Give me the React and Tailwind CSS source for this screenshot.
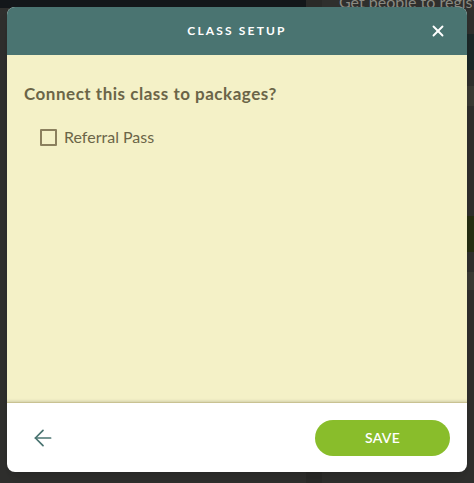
import React from "react";
import { X, ArrowLeft } from "lucide-react";

const font = { fontFamily: "Lato, 'Open Sans', sans-serif" };

const Backdrop = () => (
  <div className="absolute inset-0 flex bg-[#2f2f2d]">
    <div className="w-[306px] h-[8px] bg-[#13171a]" />
    <div className="w-[16px] h-full bg-[#2a2a28]" />
    <div className="flex-1 flex flex-col overflow-hidden">
      <div className="h-[8px] overflow-hidden whitespace-nowrap pl-[17px] text-[#8a8a82] text-[16px] leading-[4px]">Get people to register</div>
      <div className="h-[26px]" />
      <div className="h-[36px] bg-[#1c2828]" />
      <div className="h-[16px]" />
      <div className="h-[20px] bg-[#3a3a34]" />
      <div className="h-[110px]" />
      <div className="h-[36px] bg-[#252e12]" />
      <div className="h-[20px]" />
      <div className="h-[18px] bg-[#3a3a34]" />
    </div>
  </div>
);

export default function App() {
  return (
    <div className="relative w-[474px] h-[483px] overflow-hidden" style={font}>
      <Backdrop />
      <div className="absolute left-[7px] top-[7px] w-[460px] h-[465px] rounded-[8px] overflow-hidden flex flex-col bg-white shadow-lg">
        <div className="h-[48px] bg-[#4a7471] flex items-center justify-center relative">
          <h1 className="text-white text-[12px] font-bold tracking-[0.18em]">CLASS SETUP</h1>
          <button className="absolute right-[20px] top-[15px] text-white">
            <X className="w-[18px] h-[18px]" strokeWidth={2.5} />
          </button>
        </div>
        <div className="flex-1 bg-[#f4f1c7] px-[17px] pt-[28px] border-b border-[#c9c292] shadow-[inset_0_-3px_3px_-2px_rgba(0,0,0,0.15)]">
          <p className="text-[#6b6548] text-[17px] leading-[22px] font-bold tracking-[0.03em]">Connect this class to packages?</p>
          <label className="flex items-center gap-[7px] mt-[20px] ml-[16px]">
            <span className="w-[17px] h-[17px] border-2 border-[#8b805e] rounded-[1px]" />
            <span className="text-[#6b6548] text-[16px]">Referral Pass</span>
          </label>
        </div>
        <div className="h-[69px] flex items-center justify-between pl-[23px] pr-[17px]">
          <ArrowLeft className="w-[26px] h-[26px] text-[#4a7471]" strokeWidth={1.6} />
          <button className="w-[135px] h-[36px] rounded-full bg-[#89bd2b] text-white text-[14px] font-semibold tracking-[0.02em]">SAVE</button>
        </div>
      </div>
    </div>
  );
}
